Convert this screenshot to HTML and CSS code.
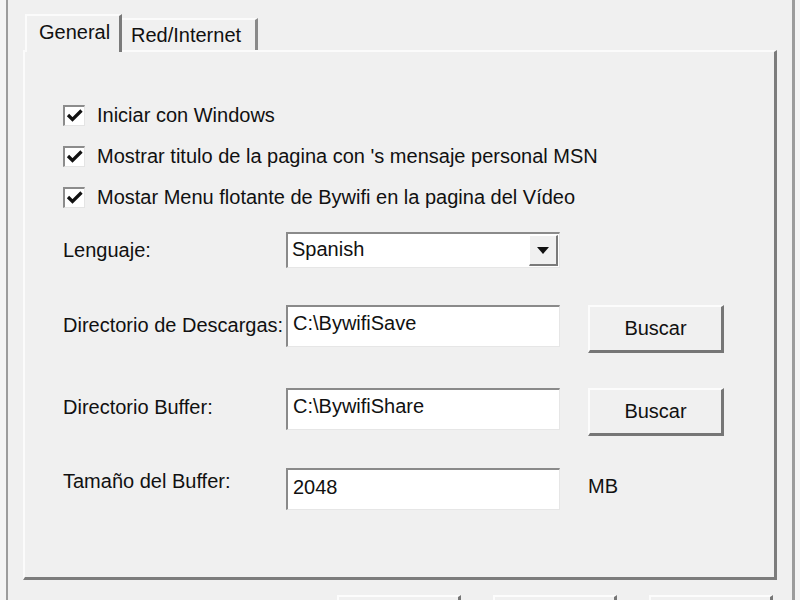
FILE: index.html
```html
<!DOCTYPE html>
<html lang="es">
<head>
  <meta charset="UTF-8">
  <meta name="viewport" content="width=device-width, initial-scale=1.0">
  <title>Opciones de Bywifi</title>
  <link rel="stylesheet" href="styles.css">
</head>
<body>
  <div class="window">
    <div class="tabs">
      <div class="tab active">General</div>
      <div class="tab">Red/Internet</div>
    </div>

    <div class="panel">
      <label class="check-row">
        <span class="checkbox"><svg viewBox="0 0 16 16" width="17" height="16"><polyline points="1.5,7 6,11.5 15,2.5" /></svg></span>
        Iniciar con Windows
      </label>
      <label class="check-row">
        <span class="checkbox"><svg viewBox="0 0 16 16" width="17" height="16"><polyline points="1.5,7 6,11.5 15,2.5" /></svg></span>
        Mostrar titulo de la pagina con 's mensaje personal MSN
      </label>
      <label class="check-row">
        <span class="checkbox"><svg viewBox="0 0 16 16" width="17" height="16"><polyline points="1.5,7 6,11.5 15,2.5" /></svg></span>
        Mostar Menu flotante de Bywifi en la pagina del Vídeo
      </label>

      <div class="field-row lang-row">
        <span class="label">Lenguaje:</span>
        <div class="select">
          <span class="select-value">Spanish</span>
          <span class="select-btn"><span class="arrow"></span></span>
        </div>
      </div>

      <div class="field-row dir-row">
        <span class="label">Directorio de Descargas:</span>
        <div class="textbox">C:\BywifiSave</div>
        <button class="btn browse">Buscar</button>
      </div>

      <div class="field-row dir-row buffer-row">
        <span class="label">Directorio Buffer:</span>
        <div class="textbox">C:\BywifiShare</div>
        <button class="btn browse">Buscar</button>
      </div>

      <div class="field-row size-row">
        <span class="label">Tamaño del Buffer:</span>
        <div class="textbox">2048</div>
        <span class="unit">MB</span>
      </div>
    </div>

    <!-- dialog buttons, only their top edge is on screen -->
    <div class="actions">
      <button class="btn action"></button>
      <button class="btn action"></button>
      <button class="btn action"></button>
    </div>
  </div>
</body>
</html>
```

FILE: styles.css
```css
body {
  margin: 0;
  background-color: #f4f4f4;
  font-family: "Liberation Sans", Arial, sans-serif;
  font-size: 20px;
  color: #111;
  overflow: hidden;
}
.window {
  box-sizing: border-box;
  width: 789px;
  height: 600px;
  margin-left: 6px;
  background-color: #f0f0f0;
  border-left: 2px solid #9c9c9c;
  border-right: 3px solid #9c9c9c;
  overflow: hidden;
}
.tabs {
  display: flex;
  align-items: flex-end;
  height: 50px;
  padding-left: 17px;
}
.tab {
  box-sizing: border-box;
  height: 32px;
  padding: 4px 0 0 9px;
  width: 136px;
  border-top: 2px solid #fbfbfb;
  border-right: 3px solid #8a8a8a;
  background-color: #f0f0f0;
}
.tab.active {
  position: relative;
  z-index: 1;
  width: 97px;
  height: 38px;
  margin-bottom: -2px;
  padding: 5px 0 0 12px;
  border-left: 2px solid #fbfbfb;
  border-right: 3px solid #7a7a7a;
}
.panel {
  box-sizing: border-box;
  height: 530px;
  margin: 0 15px;
  padding: 43px 0 0 38px;
  border-top: 2px solid #fbfbfb;
  border-left: 2px solid #fbfbfb;
  border-right: 3px solid #7c7c7c;
  border-bottom: 3px solid #7c7c7c;
}
.check-row {
  display: flex;
  align-items: center;
  gap: 12px;
  height: 41px;
}
.checkbox {
  box-sizing: border-box;
  display: flex;
  align-items: center;
  justify-content: center;
  width: 22px;
  height: 21px;
  background-color: #fff;
  border-top: 2px solid #8c8c8c;
  border-left: 2px solid #8c8c8c;
  border-right: 1px solid #e4e4e4;
  border-bottom: 1px solid #e4e4e4;
}
.checkbox polyline {
  fill: none;
  stroke: #111;
  stroke-width: 3.2;
}
.field-row {
  display: flex;
  align-items: flex-start;
}
.label {
  width: 223px;
  flex-shrink: 0;
  line-height: 22px;
}
.lang-row {
  margin-top: 14px;
  align-items: center;
}
.select {
  box-sizing: border-box;
  display: flex;
  align-items: center;
  width: 274px;
  height: 36px;
  padding: 1px;
  background-color: #fff;
  border-top: 2px solid #8a8a8a;
  border-left: 2px solid #8a8a8a;
  border-right: 1px solid #e6e6e6;
  border-bottom: 1px solid #e6e6e6;
}
.select-value {
  flex: 1;
  padding-left: 3px;
  padding-bottom: 2px;
}
.select-btn {
  box-sizing: border-box;
  display: flex;
  align-items: center;
  justify-content: center;
  width: 29px;
  height: 31px;
  background-color: #f0f0f0;
  border-top: 1px solid #fff;
  border-left: 1px solid #fff;
  border-right: 2px solid #7a7a7a;
  border-bottom: 2px solid #7a7a7a;
}
.arrow {
  width: 0;
  height: 0;
  border-left: 6px solid transparent;
  border-right: 6px solid transparent;
  border-top: 7px solid #111;
}
.textbox {
  box-sizing: border-box;
  width: 274px;
  height: 42px;
  padding: 5px 0 0 5px;
  line-height: 22px;
  background-color: #fff;
  border-top: 2px solid #8a8a8a;
  border-left: 2px solid #8a8a8a;
  border-right: 1px solid #e6e6e6;
  border-bottom: 1px solid #e6e6e6;
}
.dir-row {
  margin-top: 37px;
}
.dir-row .label {
  padding-top: 9px;
}
.buffer-row {
  margin-top: 35px;
}
.buffer-row .label {
  padding-top: 8px;
}
.btn {
  box-sizing: border-box;
  font-family: inherit;
  font-size: 20px;
  color: #111;
  background-color: #f0f0f0;
  border-top: 2px solid #fcfcfc;
  border-left: 2px solid #fcfcfc;
  border-right: 3px solid #767676;
  border-bottom: 3px solid #767676;
  padding: 0;
}
.browse {
  width: 136px;
  height: 48px;
  margin-left: 28px;
}
.size-row {
  margin-top: 32px;
}
.size-row .label {
  padding-top: 2px;
}
.size-row .textbox {
  padding-top: 6px;
}
.unit {
  margin-left: 28px;
  padding-top: 7px;
  line-height: 22px;
}
.actions {
  display: flex;
  margin-top: 15px;
  padding-left: 329px;
}
.action {
  width: 124px;
  height: 44px;
  margin-right: 32px;
}
.action:last-child {
  margin-right: 0;
}
```
